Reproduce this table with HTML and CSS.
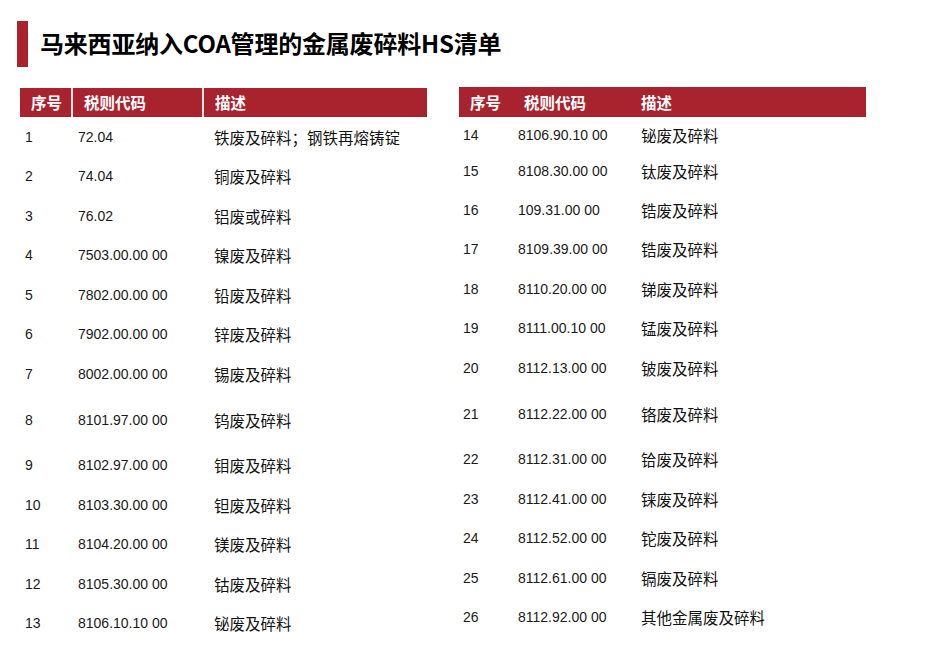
FILE: index.html
```html
<!DOCTYPE html>
<html lang="zh-CN">
<head>
<meta charset="utf-8">
<title>马来西亚纳入COA管理的金属废碎料HS清单</title>
<link rel="stylesheet" href="styles.css">
</head>
<body>
<div class="slide">
  <header class="title-row">
    <span class="title-bar"></span>
    <h1 class="title">马来西亚纳入COA管理的金属废碎料HS清单</h1>
  </header>
  <div class="tables">
    <table class="hs hs-left">
      <colgroup><col class="c1"><col class="c2"><col class="c3"></colgroup>
      <thead>
        <tr><th>序号</th><th>税则代码</th><th>描述</th></tr>
      </thead>
      <tbody>
        <tr><td>1</td><td>72.04</td><td>铁废及碎料；钢铁再熔铸锭</td></tr>
        <tr><td>2</td><td>74.04</td><td>铜废及碎料</td></tr>
        <tr><td>3</td><td>76.02</td><td>铝废或碎料</td></tr>
        <tr><td>4</td><td>7503.00.00 00</td><td>镍废及碎料</td></tr>
        <tr><td>5</td><td>7802.00.00 00</td><td>铅废及碎料</td></tr>
        <tr><td>6</td><td>7902.00.00 00</td><td>锌废及碎料</td></tr>
        <tr><td>7</td><td>8002.00.00 00</td><td>锡废及碎料</td></tr>
        <tr class="tall"><td>8</td><td>8101.97.00 00</td><td>钨废及碎料</td></tr>
        <tr><td>9</td><td>8102.97.00 00</td><td>钼废及碎料</td></tr>
        <tr><td>10</td><td>8103.30.00 00</td><td>钽废及碎料</td></tr>
        <tr><td>11</td><td>8104.20.00 00</td><td>镁废及碎料</td></tr>
        <tr><td>12</td><td>8105.30.00 00</td><td>钴废及碎料</td></tr>
        <tr><td>13</td><td>8106.10.10 00</td><td>铋废及碎料</td></tr>
      </tbody>
    </table>
    <table class="hs hs-right">
      <colgroup><col class="c1"><col class="c2"><col class="c3"></colgroup>
      <thead>
        <tr><th>序号</th><th>税则代码</th><th>描述</th></tr>
      </thead>
      <tbody>
        <tr class="short"><td>14</td><td>8106.90.10 00</td><td>铋废及碎料</td></tr>
        <tr class="mid"><td>15</td><td>8108.30.00 00</td><td>钛废及碎料</td></tr>
        <tr><td>16</td><td>109.31.00 00</td><td>锆废及碎料</td></tr>
        <tr><td>17</td><td>8109.39.00 00</td><td>锆废及碎料</td></tr>
        <tr><td>18</td><td>8110.20.00 00</td><td>锑废及碎料</td></tr>
        <tr><td>19</td><td>8111.00.10 00</td><td>锰废及碎料</td></tr>
        <tr><td>20</td><td>8112.13.00 00</td><td>铍废及碎料</td></tr>
        <tr class="tall"><td>21</td><td>8112.22.00 00</td><td>铬废及碎料</td></tr>
        <tr><td>22</td><td>8112.31.00 00</td><td>铪废及碎料</td></tr>
        <tr><td>23</td><td>8112.41.00 00</td><td>铼废及碎料</td></tr>
        <tr><td>24</td><td>8112.52.00 00</td><td>铊废及碎料</td></tr>
        <tr><td>25</td><td>8112.61.00 00</td><td>镉废及碎料</td></tr>
        <tr><td>26</td><td>8112.92.00 00</td><td>其他金属废及碎料</td></tr>
      </tbody>
    </table>
  </div>
</div>
</body>
</html>
```

FILE: styles.css
```css
* { box-sizing: border-box; }
html, body {
  margin: 0;
  padding: 0;
  background: #ffffff;
}
body {
  width: 931px;
  height: 666px;
  overflow: hidden;
  font-family: "Noto Sans CJK SC", "Noto Sans", sans-serif;
  color: #111111;
}
.slide {
  padding: 21px 0 0 17px;
}
.title-row {
  display: flex;
  align-items: center;
  gap: 12px;
  height: 46px;
}
.title-bar {
  width: 11px;
  height: 46px;
  background: #a9232f;
  flex: none;
}
.title {
  margin: 0 0 2px;
  font-size: 24px;
  font-weight: 700;
  line-height: 44px;
  letter-spacing: -0.2px;
  color: #000;
}
.tables {
  display: flex;
  align-items: flex-start;
  gap: 32px;
  margin-top: 21px;
  padding-left: 3px;
}
.hs {
  border-collapse: collapse;
  table-layout: fixed;
  width: 407px;
}
.hs th {
  background: #a9232f;
  color: #ffffff;
  font-size: 15.5px;
  font-weight: 700;
  text-align: left;
  padding: 0 0 0 11px;
  height: 29px;
  line-height: 29px;
  white-space: nowrap;
}
.hs-left th + th {
  border-left: 2px solid #f4e6e8;
}
.hs-right {
  margin-top: -1px;
}
.hs-right th {
  height: 30px;
  line-height: 30px;
}
.hs td {
  height: 39.5px;
  padding: 0;
  vertical-align: middle;
  white-space: nowrap;
}
.hs td:nth-child(1),
.hs td:nth-child(2) {
  font-family: "Liberation Sans", Arial, sans-serif;
  font-size: 14px;
  color: #1a1a1a;
}
.hs td:nth-child(1) { padding-left: 5px; }
.hs td:nth-child(2) { padding-left: 6px; }
.hs td:nth-child(3) {
  font-family: "Noto Sans CJK SC", sans-serif;
  font-size: 15.5px;
  padding-left: 11px;
  color: #111;
}
.hs-left .c1 { width: 52px; }
.hs-left .c2 { width: 131px; }
.hs-left .c3 { width: 224px; }
.hs-right .c1 { width: 54px; }
.hs-right .c2 { width: 117px; }
.hs-right .c3 { width: 236px; }
.hs-right td:nth-child(1) { padding-left: 4px; }
.hs-right td:nth-child(2) { padding-left: 5px; }
.hs tr.tall td { height: 52px; }
.hs tr.short td { height: 35px; }
.hs tr.mid td { height: 38px; }
```
